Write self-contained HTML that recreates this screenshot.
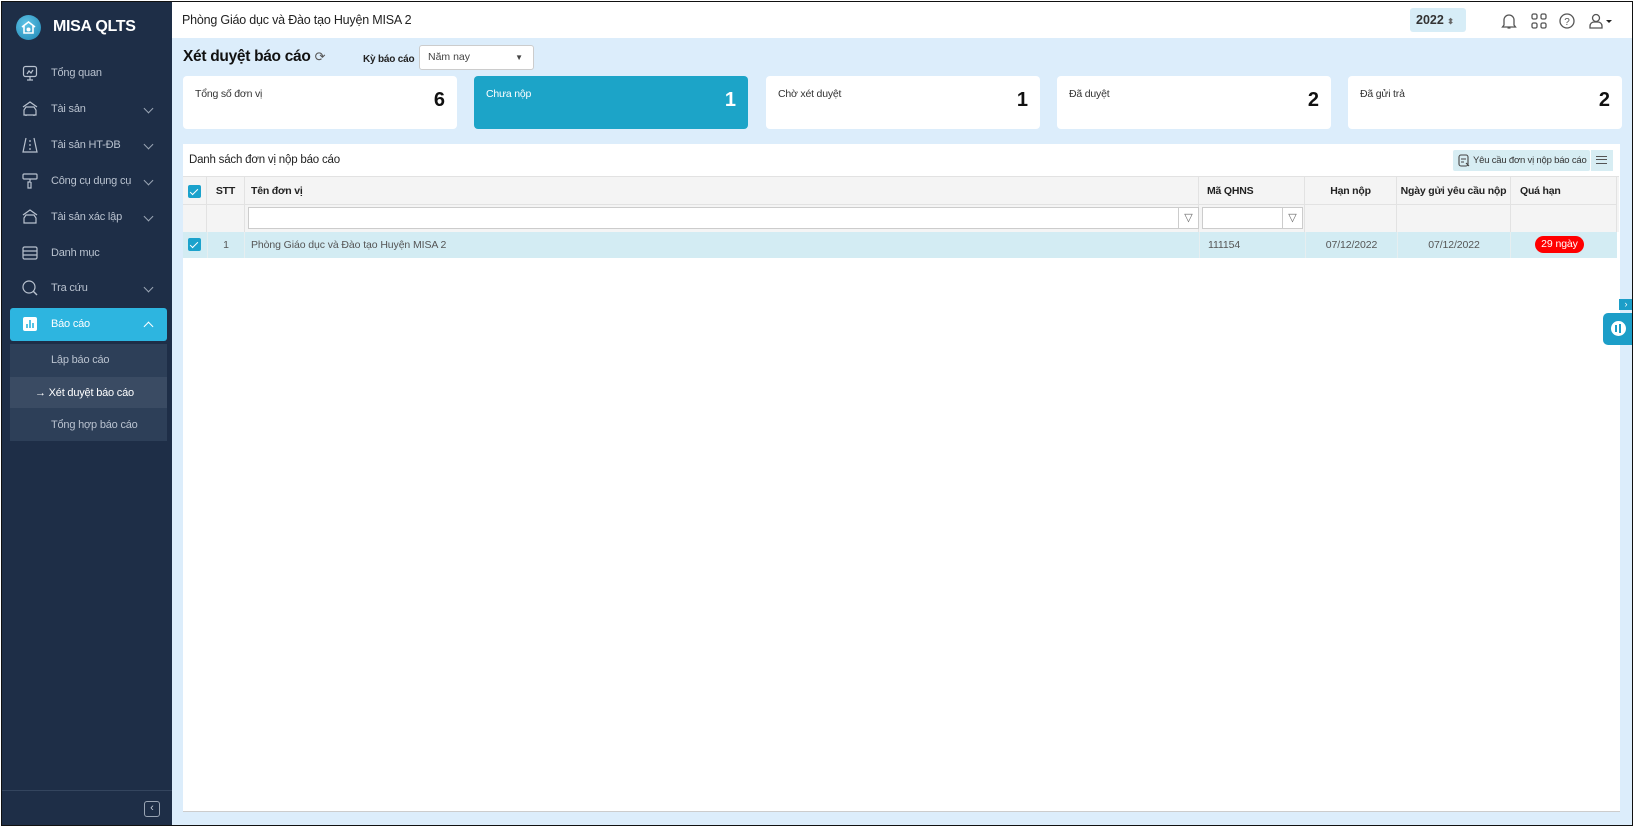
<!DOCTYPE html>
<html><head><meta charset="utf-8"><style>
*{box-sizing:border-box;margin:0;padding:0}
body{width:1636px;height:828px;background:#fff;font-family:"Liberation Sans",Arial,sans-serif;position:relative;overflow:hidden;font-size:12px;color:#212121}
.frame{position:absolute;left:1px;top:1px;width:1632px;height:825px;border:1.5px solid #111;overflow:hidden;background:#dcedfb}
.abs{position:absolute;white-space:nowrap}
.side{left:0;top:0;width:170px;height:100%;background:#1e2e47}
.mi{position:absolute;left:0;width:170px;height:30px;color:#b9c2cf;font-size:11px;line-height:30px;letter-spacing:-0.2px;white-space:nowrap}
.mi .t{position:absolute;left:49px}
.mi .ic{position:absolute;left:20px;top:7px;width:16px;height:16px}
.mi .ch{position:absolute;left:143px;top:11px;width:7px;height:7px;border-right:1.5px solid #9aa5b4;border-bottom:1.5px solid #9aa5b4;transform:rotate(45deg)}
.hdr{left:170px;top:0;right:0;height:36px;background:#fff}
.card{position:absolute;top:74px;width:274px;height:53px;background:#fff;border-radius:4px}
.card .l{position:absolute;left:12px;top:12px;font-size:10.5px;color:#333;letter-spacing:-0.2px}
.card .n{position:absolute;right:12px;top:13px;font-size:20px;font-weight:bold;color:#111}
.th{position:absolute;top:0;height:28px;line-height:28px;font-weight:bold;font-size:10.5px;color:#222;border-right:1px solid #e2e2e2;white-space:nowrap;letter-spacing:-0.2px}
.cb{position:absolute;width:13px;height:13px;background:#1ba2cc;border-radius:2px}
.cb:after{content:"";position:absolute;left:4px;top:1.5px;width:3px;height:7px;border-right:1.6px solid #fff;border-bottom:1.6px solid #fff;transform:rotate(45deg)}
</style></head><body>
<div class="frame">
<div class="abs side">
 <div class="abs" style="left:14px;top:13px;width:25px;height:25px;border-radius:50%;background:radial-gradient(circle at 40% 35%,#5fc3e6,#1e86b4)"></div>
 <svg class="abs" style="left:18px;top:17px" width="17" height="17" viewBox="0 0 17 17"><path d="M2 8 L8.5 3 L15 8 M4 7v7h9V7" fill="none" stroke="#fff" stroke-width="1.6"/><circle cx="8.5" cy="10.5" r="2" fill="#fff"/></svg>
 <div class="abs" style="left:51px;top:16px;color:#fff;font-weight:bold;font-size:16px;letter-spacing:-0.3px">MISA QLTS</div>
 <div class="mi" style="top:56px"><svg class="ic" viewBox="0 0 16 16"><rect x="1.5" y="1.5" width="13" height="10" rx="2" fill="none" stroke="#b9c2cf" stroke-width="1.2"/><path d="M5 9l2-3 2 2 2-3M8 12v3M5 15h6" fill="none" stroke="#b9c2cf" stroke-width="1.2"/></svg><span class="t">Tổng quan</span></div>
 <div class="mi" style="top:92px"><svg class="ic" viewBox="0 0 16 16"><path d="M1 6l7-5 7 5M2 9l2-3h8l2 3v5H2z M4 14v1M12 14v1" fill="none" stroke="#b9c2cf" stroke-width="1.2"/></svg><span class="t">Tài sản</span><span class="ch"></span></div>
 <div class="mi" style="top:128px"><svg class="ic" viewBox="0 0 16 16"><path d="M4 1L1 15h14L12 1M8 3v2M8 7v2M8 11v2" fill="none" stroke="#b9c2cf" stroke-width="1.2"/></svg><span class="t">Tài sản HT-ĐB</span><span class="ch"></span></div>
 <div class="mi" style="top:164px"><svg class="ic" viewBox="0 0 16 16"><rect x="1" y="1" width="14" height="5" rx="1" fill="none" stroke="#b9c2cf" stroke-width="1.2"/><path d="M8 6v3H6v6h3V9" fill="none" stroke="#b9c2cf" stroke-width="1.2"/></svg><span class="t">Công cụ dụng cụ</span><span class="ch"></span></div>
 <div class="mi" style="top:200px"><svg class="ic" viewBox="0 0 16 16"><path d="M1 6l7-5 7 5M2 9l2-3h8l2 3v5H2z" fill="none" stroke="#b9c2cf" stroke-width="1.2"/></svg><span class="t">Tài sản xác lập</span><span class="ch"></span></div>
 <div class="mi" style="top:236px"><svg class="ic" viewBox="0 0 16 16"><rect x="1" y="2" width="14" height="12" rx="1.5" fill="none" stroke="#b9c2cf" stroke-width="1.2"/><path d="M1 6h14M1 10h14" stroke="#b9c2cf" stroke-width="1.2"/></svg><span class="t">Danh mục</span></div>
 <div class="mi" style="top:271px"><svg class="ic" viewBox="0 0 16 16"><circle cx="7" cy="7" r="6" fill="none" stroke="#b9c2cf" stroke-width="1.2"/><path d="M11 11l4 4" stroke="#b9c2cf" stroke-width="1.4"/></svg><span class="t">Tra cứu</span><span class="ch"></span></div>
 <div class="abs" style="left:8px;top:306px;width:157px;height:33px;background:#2db5e0;border-radius:3px"></div>
 <div class="mi" style="top:307px;color:#fff"><svg class="ic" viewBox="0 0 16 16"><rect x="1" y="1" width="14" height="14" rx="2" fill="#fff"/><path d="M5 12V8M8 12V4M11 12V7" stroke="#2db5e0" stroke-width="1.6"/></svg><span class="t">Báo cáo</span><span class="ch" style="top:14px;transform:rotate(225deg);border-color:#fff"></span></div>
 <div class="abs" style="left:8px;top:342px;width:157px;height:97px;background:#2d3f58"></div>
 <div class="abs" style="left:8px;top:375px;width:157px;height:31px;background:#3a4b63"></div>
 <div class="mi" style="top:343px"><span class="t">Lập báo cáo</span></div>
 <div class="mi" style="top:376px;color:#fff"><span class="t" style="left:33px">→&nbsp;Xét duyệt báo cáo</span></div>
 <div class="mi" style="top:408px"><span class="t">Tổng hợp báo cáo</span></div>
 <div class="abs" style="left:0;top:788px;width:170px;height:1px;background:#34455e"></div>
 <div class="abs" style="left:142px;top:799px;width:16px;height:16px;border:1.2px solid #9aa5b4;border-radius:3px;color:#c7ced8;font-size:11px;line-height:13px;text-align:center">‹</div>
</div>
<div class="abs hdr">
 <div class="abs" style="left:10px;top:11px;font-size:12.5px;color:#222;letter-spacing:-0.2px">Phòng Giáo dục và Đào tạo Huyện MISA 2</div>
 <div class="abs" style="left:1238px;top:6px;width:56px;height:24px;background:#d7edf7;border-radius:3px;font-weight:bold;font-size:12.5px;line-height:24px;padding-left:6px;color:#333">2022 <span style="font-size:8px;color:#666">⬍</span></div>
 <svg class="abs" style="left:1329px;top:10px" width="16" height="18" viewBox="0 0 16 18"><path d="M3 13V8a5 5 0 0110 0v5l1.5 2h-13zM6.5 16h3" fill="none" stroke="#555" stroke-width="1.3"/></svg>
 <svg class="abs" style="left:1359px;top:11px" width="16" height="16" viewBox="0 0 16 16"><g fill="none" stroke="#555" stroke-width="1.3"><rect x="1" y="1" width="5" height="5" rx="1.5"/><rect x="10" y="1" width="5" height="5" rx="1.5"/><rect x="1" y="10" width="5" height="5" rx="1.5"/><rect x="10" y="10" width="5" height="5" rx="1.5"/></g></svg>
 <svg class="abs" style="left:1387px;top:11px" width="16" height="16" viewBox="0 0 16 16"><circle cx="8" cy="8" r="7" fill="none" stroke="#555" stroke-width="1.3"/><text x="8" y="12" font-size="10" text-anchor="middle" fill="#555" font-family="Liberation Sans">?</text></svg>
 <svg class="abs" style="left:1417px;top:10px" width="26" height="18" viewBox="0 0 26 18"><circle cx="7" cy="6" r="3.5" fill="none" stroke="#555" stroke-width="1.3"/><path d="M1 16v-2a4 4 0 014-4h4a4 4 0 014 4v2z" fill="none" stroke="#555" stroke-width="1.3"/><path d="M17 8h6l-3 3z" fill="#222"/></svg>
</div>
<div class="abs" style="left:181px;top:46px;font-size:15.5px;font-weight:bold;color:#111;letter-spacing:-0.3px">Xét duyệt báo cáo <span style="font-weight:normal;font-size:13px;color:#555">⟳</span></div>
<div class="abs" style="left:361px;top:52px;font-size:10px;font-weight:bold;color:#222;letter-spacing:-0.2px">Kỳ báo cáo</div>
<div class="abs" style="left:417px;top:43px;width:115px;height:25px;background:#fff;border:1px solid #ccc;border-radius:3px;font-size:10.5px;line-height:23px;padding-left:8px;color:#444">Năm nay<span style="position:absolute;right:10px;top:0;font-size:8px">▼</span></div>
<div class="card" style="left:181px"><span class="l">Tổng số đơn vị</span><span class="n">6</span></div>
<div class="card" style="left:472px;background:#1ca4c8"><span class="l" style="color:#fff">Chưa nộp</span><span class="n" style="color:#fff">1</span></div>
<div class="card" style="left:764px"><span class="l">Chờ xét duyệt</span><span class="n">1</span></div>
<div class="card" style="left:1055px"><span class="l">Đã duyệt</span><span class="n">2</span></div>
<div class="card" style="left:1346px"><span class="l">Đã gửi trả</span><span class="n">2</span></div>
<div class="abs" style="left:181px;top:142px;width:1437px;height:668px;background:#fff;border-bottom:1px solid #ccc">
 <div class="abs" style="left:6px;top:10px;font-size:11.5px;color:#222;letter-spacing:-0.2px">Danh sách đơn vị nộp báo cáo</div>
 <div class="abs" style="left:1270px;top:6px;width:137px;height:21px;background:#d7edf3;border-radius:2px;font-size:9.5px;line-height:21px;color:#333;padding-left:20px;letter-spacing:-0.2px;overflow:hidden">
  <svg class="abs" style="left:5px;top:4px" width="12" height="13" viewBox="0 0 12 13"><rect x="1" y="1" width="9" height="11" rx="2" fill="none" stroke="#444" stroke-width="1.1"/><path d="M3 5h5M3 8h3M8 9l3 3" stroke="#444" stroke-width="1.1"/></svg>Yêu cầu đơn vị nộp báo cáo</div>
 <div class="abs" style="left:1408px;top:6px;width:22px;height:21px;background:#d7edf3"><div style="margin:6px 5px;width:11px;height:8px;border-top:1.3px solid #555;border-bottom:1.3px solid #555;position:relative"><div style="position:absolute;top:2.3px;width:11px;border-top:1.3px solid #555"></div></div></div>
 <div class="abs" style="left:0;top:32px;width:1436px;height:56px;background:#f4f4f4;border-top:1px solid #e2e2e2">
  <div class="th" style="left:0;width:24px;height:56px"></div>
  <div class="th" style="left:24px;width:38px;height:56px;text-align:center">STT</div>
  <div class="th" style="left:62px;width:954px;height:56px;padding-left:6px">Tên đơn vị</div>
  <div class="th" style="left:1016px;width:106px;height:56px;padding-left:8px">Mã QHNS</div>
  <div class="th" style="left:1122px;width:92px;height:56px;text-align:center">Hạn nộp</div>
  <div class="th" style="left:1214px;width:114px;height:56px;text-align:center">Ngày gửi yêu cầu nộp</div>
  <div class="th" style="left:1328px;width:106px;height:56px;padding-left:9px">Quá hạn</div>
  <div class="abs" style="left:0;top:27px;width:1434px;height:1px;background:#e2e2e2"></div>
  <div class="abs" style="left:65px;top:30px;width:951px;height:22px;background:#fff;border:1px solid #ccc"><div style="position:absolute;right:0;top:0;width:20px;height:20px;border-left:1px solid #ccc;color:#666;text-align:center;font-size:11px;line-height:20px">▽</div></div>
  <div class="abs" style="left:1019px;top:30px;width:101px;height:22px;background:#fff;border:1px solid #ccc"><div style="position:absolute;right:0;top:0;width:20px;height:20px;border-left:1px solid #ccc;color:#666;text-align:center;font-size:11px;line-height:20px">▽</div></div>
  <div class="cb" style="left:5px;top:8px"></div>
 </div>
 <div class="abs" style="left:0;top:88px;width:1434px;height:26px;background:#d3ecf3;font-size:10.5px;color:#555;line-height:26px;letter-spacing:-0.1px">
  <div class="cb" style="left:5px;top:6px"></div>
  <div class="abs" style="left:24px;width:38px;height:26px;border-left:1px solid #e6eef0;border-right:1px solid #e6eef0;text-align:center">1</div>
  <div class="abs" style="left:68px">Phòng Giáo dục và Đào tạo Huyện MISA 2</div>
  <div class="abs" style="left:1016px;width:106px;height:26px;border-left:1px solid #e6eef0;padding-left:8px">111154</div>
  <div class="abs" style="left:1122px;width:92px;height:26px;border-left:1px solid #e6eef0;text-align:center">07/12/2022</div>
  <div class="abs" style="left:1214px;width:114px;height:26px;border-left:1px solid #e6eef0;border-right:1px solid #e6eef0;text-align:center">07/12/2022</div>
  <div class="abs" style="left:1352px;top:4px;width:49px;height:17px;background:#f00;color:#fff;border-radius:9px;text-align:center;line-height:17px">29 ngày</div>
 </div>
</div>
<div class="abs" style="left:1617px;top:297px;width:14px;height:11px;background:#1c9ec8;color:#fff;font-size:9px;line-height:11px;text-align:center">›</div>
<div class="abs" style="left:1601px;top:311px;width:32px;height:32px;background:#1c9ec8;border-radius:5px 0 0 5px"><div style="margin:8px 0 0 8px;width:15px;height:15px;border-radius:50%;background:#fff;position:relative"><div style="position:absolute;left:4px;top:4px;width:2px;height:7px;background:#1c9ec8"></div><div style="position:absolute;left:8px;top:3px;width:2px;height:9px;background:#1c9ec8"></div></div></div>
</div>
</body></html>
